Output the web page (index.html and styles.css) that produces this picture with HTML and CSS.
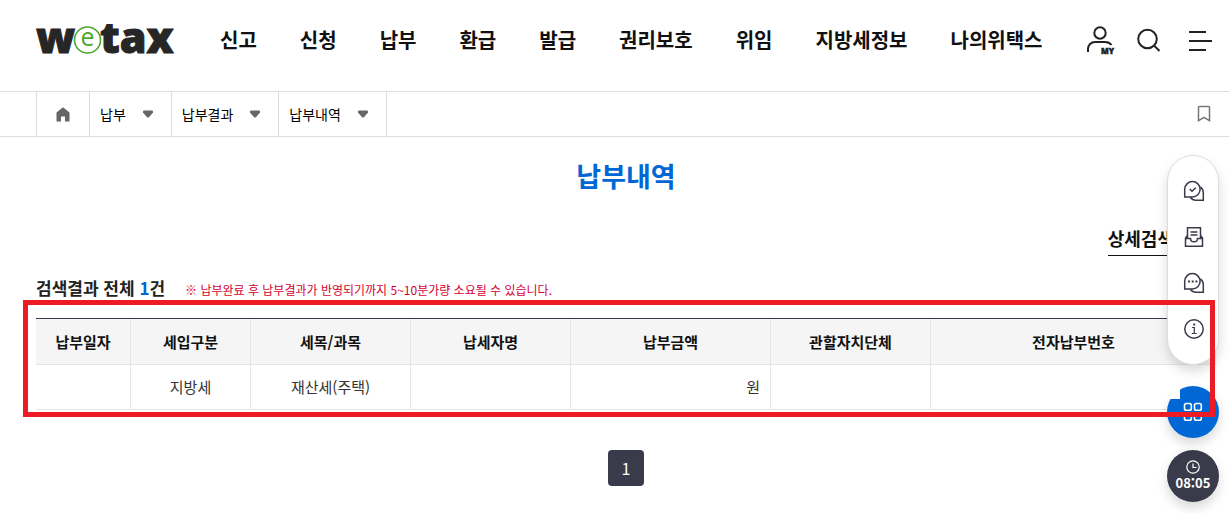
FILE: index.html
```html
<!DOCTYPE html>
<html lang="ko">
<head>
<meta charset="utf-8">
<meta name="viewport" content="width=device-width, initial-scale=1">
<title>납부내역</title>
<link rel="stylesheet" href="styles.css">
</head>
<body>
<header class="header">
  <a class="logo" href="#" aria-label="wetax"><svg width="152" height="72" viewBox="-4 -16 152 72"><text class="logo-word" x="0" y="33">w</text><text class="logo-word" x="64" y="33">tax</text><circle cx="51.500" cy="20" r="13" fill="#fff" stroke="#4ea72e" stroke-width="1.600"/><text class="logo-e" x="51.500" y="26" text-anchor="middle">e</text></svg></a>
  <nav class="nav">
    <a href="#">신고</a><a href="#">신청</a><a href="#">납부</a><a href="#">환급</a><a href="#">발급</a><a href="#">권리보호</a><a href="#">위임</a><a href="#">지방세정보</a><a href="#">나의위택스</a>
  </nav>
  <div class="tools">
    <button type="button" class="tool" aria-label="마이페이지">
      <svg width="30" height="30" viewBox="0 0 30 30" fill="none" stroke="#222" stroke-width="2"><circle cx="15" cy="8" r="5.700"/><path d="M3 27v-3a7 7 0 0 1 7-7h10c3 0 5 1 6.500 3"/><text class="my" x="16" y="29">MY</text></svg>
    </button>
    <button type="button" class="tool" aria-label="검색">
      <svg width="30" height="30" viewBox="0 0 30 30" fill="none" stroke="#222" stroke-width="2"><circle cx="12.500" cy="14" r="9.300"/><path d="M19 20.500l5.500 5.500"/></svg>
    </button>
    <button type="button" class="tool" aria-label="전체메뉴">
      <svg width="30" height="30" viewBox="0 0 30 30" fill="none" stroke="#222" stroke-width="2"><path d="M4 7h17M4 16h23M4 25h17"/></svg>
    </button>
  </div>
</header>

<div class="location">
  <div class="crumbs">
    <a class="home" href="#" aria-label="홈"><svg width="14" height="15" viewBox="0 0 14 15" fill="#666"><path d="M7 .3 13.500 5.500V14.500H9V9.500H5v5H.5V5.500z"/></svg></a>
    <button type="button" class="crumb" aria-haspopup="true">납부<svg width="10" height="8" viewBox="0 0 10 8" fill="#666"><path d="M1 .5h8q1 0 1 1v1L6 7.200Q5 8 4 7.200L0 2.500v-1q0-1 1-1z"/></svg></button>
    <button type="button" class="crumb" aria-haspopup="true">납부결과<svg width="10" height="8" viewBox="0 0 10 8" fill="#666"><path d="M1 .5h8q1 0 1 1v1L6 7.200Q5 8 4 7.200L0 2.500v-1q0-1 1-1z"/></svg></button>
    <button type="button" class="crumb" aria-haspopup="true">납부내역<svg width="10" height="8" viewBox="0 0 10 8" fill="#666"><path d="M1 .5h8q1 0 1 1v1L6 7.200Q5 8 4 7.200L0 2.500v-1q0-1 1-1z"/></svg></button>
  </div>
  <button type="button" class="bookmark" aria-label="즐겨찾기"><svg width="14" height="18" viewBox="0 0 14 18" fill="none" stroke="#777" stroke-width="1.500"><path d="M2.500 1.500h9a1 1 0 0 1 1 1v13.200L7 12.300l-5.500 3.400V2.500a1 1 0 0 1 1-1z"/></svg></button>
</div>

<main class="main">
  <h1 class="title">납부내역</h1>
  <div class="search-row"><button type="button" class="detail">상세검색<svg width="14" height="8" viewBox="0 0 14 8" fill="none" stroke="#111" stroke-width="2"><path d="M1 1l6 6 6-6"/></svg></button></div>
  <div class="result-head">
    <h2 class="count">검색결과 전체 <em>1</em>건</h2>
    <p class="note">※ 납부완료 후 납부결과가 반영되기까지 5~10분가량 소요될 수 있습니다.</p>
  </div>
  <div class="table-wrap">
    <table class="table">
      <colgroup><col class="c-date"><col class="c-kind"><col class="c-mid"><col class="c-mid"><col class="c-amount"><col class="c-mid"><col></colgroup>
      <thead><tr><th scope="col">납부일자</th><th scope="col">세입구분</th><th scope="col">세목/과목</th><th scope="col">납세자명</th><th scope="col">납부금액</th><th scope="col">관할자치단체</th><th scope="col">전자납부번호</th></tr></thead>
      <tbody><tr><td></td><td>지방세</td><td>재산세(주택)</td><td></td><td class="amount">원</td><td></td><td></td></tr></tbody>
    </table>
    <div class="highlight"></div>
  </div>
  <nav class="paging" aria-label="페이지"><button type="button" class="page" aria-current="page">1</button></nav>
</main>

<aside class="quick">
  <div class="pill">
    <button type="button" aria-label="확인"><svg width="22" height="22" viewBox="0 0 22 22" fill="none" stroke="#3a3a4a" stroke-width="1.500"><path d="M1.700 17V9.300a7.700 7.700 0 1 1 7.700 7.700z"/><path d="M17.300 7c2 1.200 3 3.400 3 6v7.300h-7.500c-2.300 0-4-1-5.500-3"/><path d="M6.700 9l2.300 2.300 3.800-3.500"/></svg></button>
    <button type="button" aria-label="전자문서"><svg width="22" height="22" viewBox="0 0 22 22" fill="none" stroke="#3a3a4a" stroke-width="1.500"><path d="M4.500 12V1.700h13V12M7.500 6h7M7.500 9h7"/><path d="M4.500 9.500 2.500 12v8.300h17V12l-2-2.500M2.500 12.500h5c0 2 1.500 3.300 3.500 3.300s3.500-1.300 3.500-3.300h5"/></svg></button>
    <button type="button" aria-label="상담"><svg width="22" height="22" viewBox="0 0 22 22" fill="none" stroke="#3a3a4a" stroke-width="1.500"><path d="M1.700 17V9.300a7.700 7.700 0 1 1 7.700 7.700z"/><path d="M17.300 7c2 1.200 3 3.400 3 6v7.300h-7.500c-2.300 0-4-1-5.500-3"/><path stroke-width="2" d="M5 9.500h2M8.700 9.500h2M12.400 9.500h2"/></svg></button>
    <button type="button" aria-label="안내"><svg width="22" height="22" viewBox="0 0 22 22" fill="none" stroke="#3a3a4a" stroke-width="1.500"><circle cx="11" cy="11" r="9.200"/><path stroke-width="1.200" d="M9 9.500h2.300v6M8.700 15.500h5"/><path stroke-width="2" d="M10.200 6.500h2"/></svg></button>
  </div>
  <button type="button" class="round apps" aria-label="자주 찾는 서비스"><svg width="20" height="20" viewBox="0 0 20 20" fill="none" stroke="#fff" stroke-width="1.600"><rect x="1.500" y="1.500" width="6.800" height="6.800" rx="1.800"/><rect x="11.500" y="1.500" width="6.800" height="6.800" rx="1.800"/><rect x="1.500" y="11.500" width="6.800" height="6.800" rx="1.800"/><rect x="11.500" y="11.500" width="6.800" height="6.800" rx="1.800"/></svg></button>
  <button type="button" class="round timer"><svg width="14" height="14" viewBox="0 0 14 14" fill="none" stroke="#fff" stroke-width="1.200"><circle cx="7" cy="7" r="6.200"/><path d="M7 3.500v4h3.500"/></svg><span>08:05</span></button>
</aside>
</body>
</html>
```
FILE: styles.css
```css
* { box-sizing: border-box; }
body {
  margin: 0;
  background: #fff;
  color: #111;
  font-family: "Noto Sans CJK KR", sans-serif;
  font-size: 15px;
}
a { color: inherit; text-decoration: none; }
button {
  margin: 0;
  padding: 0;
  border: 0;
  background: none;
  color: inherit;
  font: inherit;
}
svg { display: block; flex: none; }

.header {
  display: flex;
  align-items: center;
  height: 91px;
  padding: 0 14px 12px 32px;
}
.logo { width: 188px; }
.logo-word {
  fill: #262626;
  stroke: #262626;
  stroke-width: 1px;
  font: 800 43px "Open Sans", sans-serif;
}
.logo-e {
  fill: #4ea72e;
  font: 400 25px "Open Sans", sans-serif;
}
.nav {
  display: flex;
  gap: 43px;
  font-size: 20px;
  font-weight: 700;
  line-height: 30px;
  white-space: nowrap;
}
.tools { display: flex; gap: 20px; margin-left: auto; }
.my {
  fill: #222;
  stroke: #222;
  stroke-width: 0.5px;
  font: 800 8px "Open Sans", sans-serif;
}

.location {
  display: flex;
  align-items: stretch;
  justify-content: space-between;
  height: 46px;
  padding: 0 18px 0 36px;
  border-top: 1px solid #ddd;
  border-bottom: 1px solid #ddd;
}
.crumbs { display: flex; border-left: 1px solid #ddd; }
.home {
  display: flex;
  align-items: center;
  justify-content: center;
  width: 53px;
  border-right: 1px solid #ddd;
}
.crumb {
  display: flex;
  align-items: center;
  gap: 17px;
  padding: 0 18px 0 10px;
  border-right: 1px solid #ddd;
  color: #000;
  font-size: 14px;
}

.main { padding: 19px 13px 27px 36px; }
.title {
  margin: 0;
  color: #0067d5;
  font-size: 27px;
  font-weight: 700;
  line-height: 40px;
  text-align: center;
}
.search-row { display: flex; justify-content: flex-end; margin-top: 29px; }
.detail {
  display: flex;
  align-items: center;
  gap: 14px;
  padding: 0 14px 3px 0;
  border-bottom: 1px solid #111;
  font-size: 18px;
  font-weight: 700;
  line-height: 27px;
}
.result-head {
  display: flex;
  align-items: baseline;
  gap: 20px;
  margin-top: 18px;
}
.count { margin: 0; color: #222; font-size: 17px; line-height: 28px; }
.count em { color: #0067d5; font-style: normal; }
.note { margin: 0; color: #d60030; font-size: 12px; line-height: 18px; }

.table-wrap { position: relative; margin-top: 16px; }
.table {
  width: 100%;
  border-collapse: separate;
  border-spacing: 0;
  border-top: 1px solid #3a3a4a;
  table-layout: fixed;
  line-height: 22px;
}
.c-date { width: 95px; }
.c-kind { width: 120px; }
.c-mid { width: 160px; }
.c-amount { width: 200px; }
.table th, .table td {
  height: 45px;
  padding: 0 10px;
  border-right: 1px solid #e5e5e5;
  border-bottom: 1px solid #e5e5e5;
  text-align: center;
}
.table th { height: 46px; background: #f5f5f5; }
.table td { color: #333; }
.table th:last-child, .table td:last-child { border-right: 0; }
.table .amount { text-align: right; }
.highlight {
  position: absolute;
  inset: -18px 1px -7px -13px;
  z-index: 2;
  border: 5px solid #ed1c24;
  pointer-events: none;
}

.paging { display: flex; justify-content: center; margin-top: 40px; }
.page {
  width: 36px;
  height: 36px;
  border-radius: 4px;
  background: #3a3b4a;
  color: #fff;
  font-size: 16px;
}

.quick {
  position: absolute;
  top: 155px;
  right: 10px;
  z-index: 1;
  width: 52px;
}
.pill {
  display: flex;
  flex-direction: column;
  align-items: center;
  gap: 24px;
  padding: 24px 0 24px 2px;
  border: 1px solid #ddd;
  border-radius: 26px;
  background: #fff;
  box-shadow: 0 6px 12px rgba(0, 0, 0, 0.15);
}
.round {
  display: flex;
  flex-direction: column;
  align-items: center;
  justify-content: center;
  width: 52px;
  height: 52px;
  margin-top: 12px;
  border-radius: 50%;
  background: #3a3b4a;
  color: #fff;
  box-shadow: 0 6px 12px rgba(0, 0, 0, 0.15);
}
.apps {
  position: relative;
  margin-top: 21px;
  background: #0067d5;
}
.apps::before {
  content: "";
  position: absolute;
  top: 0;
  left: 0;
  width: 13px;
  height: 13px;
  background: #fff;
}
.timer { font-size: 13px; font-weight: 700; line-height: 18px; }
```
